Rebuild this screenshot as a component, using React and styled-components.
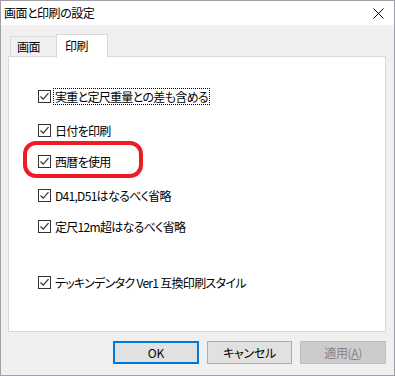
import React from 'react';
import styled, { createGlobalStyle } from 'styled-components';

const GlobalStyle = createGlobalStyle`
  html, body {
    margin: 0;
    padding: 0;
    background: #ffffff;
  }
  * {
    box-sizing: border-box;
  }
`;

const FONT = `"Noto Sans CJK JP", "Noto Sans", sans-serif`;

const Window = styled.div`
  width: 395px;
  height: 376px;
  border: 1px solid #a39fa8;
  background: #f0f0f0;
  display: flex;
  flex-direction: column;
  font-family: ${FONT};
  font-size: 12px;
  font-feature-settings: "palt";
  color: #000;
`;

const TitleBar = styled.div`
  height: 24px;
  flex: 0 0 24px;
  background: #fff;
  display: flex;
  align-items: center;
  justify-content: space-between;
  padding: 0 10px 0 3px;
`;

const Title = styled.span`
  font-size: 12px;
  letter-spacing: -0.5px;
  line-height: 1;
`;

const Body = styled.div`
  flex: 1;
  padding: 9px 8px 0 7px;
  display: flex;
  flex-direction: column;
`;

const TabStrip = styled.div`
  display: flex;
  align-items: flex-end;
  padding-left: 2px;
  height: 23px;
  position: relative;
  z-index: 1;
`;

const Tab = styled.div`
  height: ${({ active }) => (active ? '24px' : '21px')};
  margin-bottom: ${({ active }) => (active ? '-1px' : '0')};
  width: ${({ w }) => w}px;
  border: 1px solid #d9d9d9;
  border-bottom: ${({ active }) => (active ? 'none' : '1px solid #d9d9d9')};
  margin-left: ${({ active }) => (active ? '-1px' : '0')};
  background: ${({ active }) => (active ? '#fff' : '#f0f0f0')};
  display: flex;
  align-items: ${({ active }) => (active ? 'flex-start' : 'center')};
  padding: ${({ active }) => (active ? '3px 0 0 8px' : '1px 0 0 6px')};
  letter-spacing: -0.6px;
  line-height: 16px;
`;

const Panel = styled.div`
  position: relative;
  height: 276px;
  margin-top: -1px;
  width: 378px;
  background: #fff;
  border: 1px solid #d9d9d9;
  padding: 31px 0 0 29px;
  display: flex;
  flex-direction: column;
`;

const Row = styled.div`
  display: flex;
  align-items: center;
  height: 16px;
  margin-top: ${({ gap }) => gap || 0}px;
`;

const Box = styled.span`
  width: 13px;
  height: 13px;
  border: 1px solid #333;
  background: #fff;
  display: flex;
  align-items: center;
  justify-content: center;
  flex: 0 0 13px;
`;

const Label = styled.span`
  margin-left: 3px;
  padding: 1px 1px 0;
  letter-spacing: -0.7px;
  line-height: 14px;
  white-space: nowrap;
  outline: ${({ focused }) => (focused ? '1px dotted #000' : 'none')};
`;

const Highlight = styled.div`
  position: absolute;
  left: 14px;
  top: 84px;
  width: 120px;
  height: 37px;
  border: 4px solid #ed1c24;
  border-radius: 13px;
  pointer-events: none;
`;

const ButtonRow = styled.div`
  display: flex;
  gap: 8px;
  margin-top: 9px;
  padding-left: 105px;
`;

const Button = styled.div`
  width: 86px;
  height: 23px;
  display: flex;
  align-items: center;
  justify-content: center;
  font-size: 12px;
  letter-spacing: -0.3px;
  background: ${({ disabled }) => (disabled ? '#cccccc' : '#e1e1e1')};
  color: ${({ disabled }) => (disabled ? '#838383' : '#000')};
  border: ${({ primary, disabled }) =>
    primary ? '2px solid #0078d7' : disabled ? '1px solid #bfbfbf' : '1px solid #adadad'};
`;

const Check = () => (
  <Box>
    <svg width="11" height="11" viewBox="0 0 11 11">
      <path d="M1.5 5.5 L4.2 8.2 L9.5 2.2" fill="none" stroke="#333" strokeWidth="1.2" />
    </svg>
  </Box>
);

const CloseIcon = () => (
  <svg width="11" height="11" viewBox="0 0 11 11">
    <path d="M0.5 0.5 L10.5 10.5 M10.5 0.5 L0.5 10.5" stroke="#000" strokeWidth="1" />
  </svg>
);

const options = [
  { text: '実重と定尺重量との差も含める', gap: 0, focused: true },
  { text: '日付を印刷', gap: 18 },
  { text: '西暦を使用', gap: 15 },
  { text: 'D41,D51はなるべく省略', gap: 18 },
  { text: '定尺12m超はなるべく省略', gap: 15 },
  { text: 'テッキンデンタク Ver1 互換印刷スタイル', gap: 40 },
];

export default function App() {
  return (
    <>
      <GlobalStyle />
      <Window>
        <TitleBar>
          <Title>画面と印刷の設定</Title>
          <CloseIcon />
        </TitleBar>
        <Body>
          <TabStrip>
            <Tab w={47}>画面</Tab>
            <Tab active w={52}>印刷</Tab>
          </TabStrip>
          <Panel>
            {options.map((o) => (
              <Row key={o.text} gap={o.gap}>
                <Check />
                <Label focused={o.focused}>{o.text}</Label>
              </Row>
            ))}
            <Highlight />
          </Panel>
          <ButtonRow>
            <Button primary>OK</Button>
            <Button>キャンセル</Button>
            <Button disabled>
              適用(<u>A</u>)
            </Button>
          </ButtonRow>
        </Body>
      </Window>
    </>
  );
}
